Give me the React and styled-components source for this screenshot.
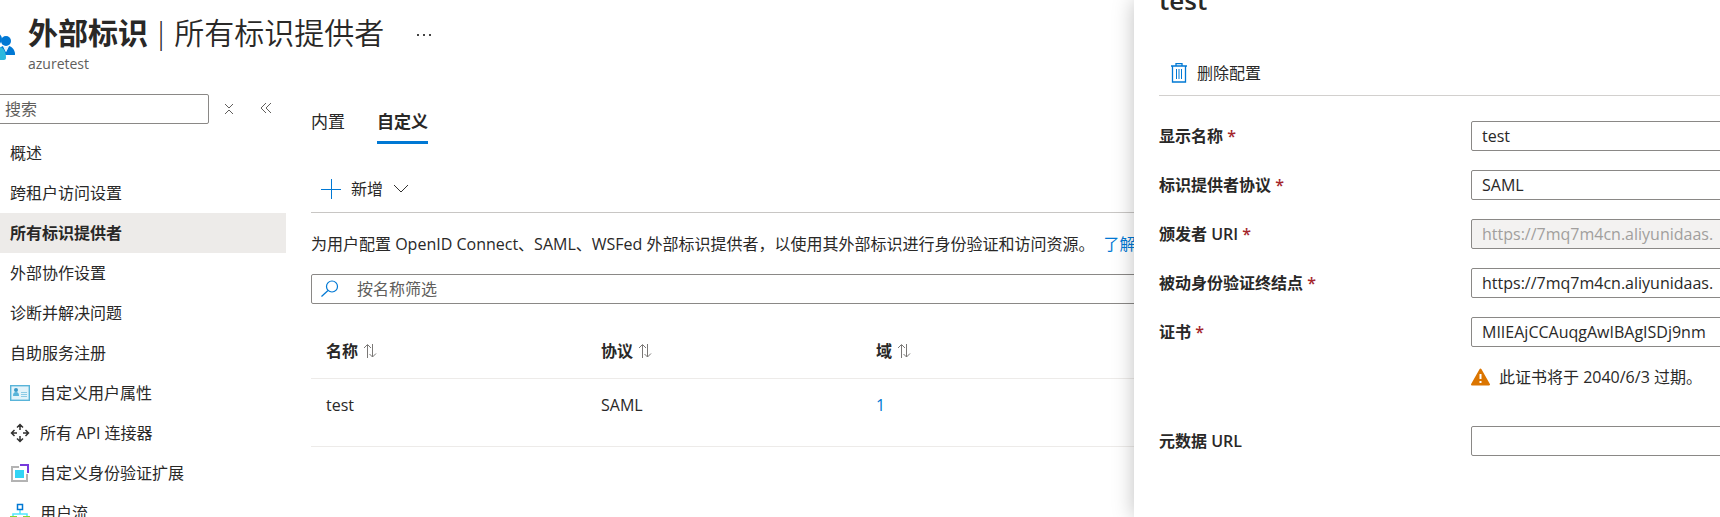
import React from 'react'
import styled, {createGlobalStyle, css} from 'styled-components';

const topItems = ['概述', '跨租户访问设置', '所有标识提供者', '外部协作设置', '诊断并解决问题', '自助服务注册'];

const iconItems = [
    {label: '自定义用户属性', icon: <AttributesIcon/>},
    {label: '所有 API 连接器', icon: <ConnectorsIcon/>},
    {label: '自定义身份验证扩展', icon: <ExtensionsIcon/>},
    {label: '用户流', icon: <FlowIcon/>},
];

const columns = ['名称', '协议', '域'];

const fields = [
    {id: 'name', label: '显示名称', value: 'test'},
    {id: 'protocol', label: '标识提供者协议', value: 'SAML'},
    {id: 'issuer', label: '颁发者 URI', value: 'https://7mq7m4cn.aliyunidaas.', disabled: true},
    {id: 'endpoint', label: '被动身份验证终结点', value: 'https://7mq7m4cn.aliyunidaas.'},
    {id: 'cert', label: '证书', value: 'MIIEAjCCAuqgAwIBAgISDj9nm'},
];

function App() {
    return (
        <Shell>
            <GlobalStyle/>
            <Header>
                <PeopleIcon/>
                <Heading>
                    <TitleRow>
                        <Title><b>外部标识</b><span>|</span><span>所有标识提供者</span></Title>
                        <IconButton aria-label="更多"><DotsIcon/></IconButton>
                    </TitleRow>
                    <Subtitle>azuretest</Subtitle>
                </Heading>
            </Header>
            <Body>
                <Sidebar>
                    <SearchRow>
                        <SearchInput type="text" placeholder="搜索" aria-label="搜索"/>
                        <IconButton aria-label="展开"><ExpandIcon/></IconButton>
                        <IconButton aria-label="折叠菜单"><CollapseIcon/></IconButton>
                    </SearchRow>
                    <Menu>
                        {topItems.map(item =>
                            <MenuItem key={item} href="#" $active={item === '所有标识提供者'}>{item}</MenuItem>
                        )}
                    </Menu>
                    <Menu>
                        {iconItems.map(({label, icon}) =>
                            <MenuItem key={label} href="#">{icon}{label}</MenuItem>
                        )}
                    </Menu>
                </Sidebar>
                <Main>
                    <Tabs>
                        <Tab>内置</Tab>
                        <Tab $active>自定义</Tab>
                    </Tabs>
                    <Toolbar>
                        <Command><PlusIcon/>新增<ChevronIcon/></Command>
                    </Toolbar>
                    <Intro>
                        <span>为用户配置 OpenID Connect、SAML、WSFed 外部标识提供者，以使用其外部标识进行身份验证和访问资源。</span>
                        <Link href="#">了解</Link>
                    </Intro>
                    <Filter>
                        <SearchIcon/>
                        <input type="text" placeholder="按名称筛选" aria-label="按名称筛选"/>
                    </Filter>
                    <Table>
                        <thead>
                            <tr>
                                {columns.map(name =>
                                    <th key={name}><SortLabel>{name}<SortIcon/></SortLabel></th>
                                )}
                                <th></th>
                            </tr>
                        </thead>
                        <tbody>
                            <tr>
                                <td>test</td>
                                <td>SAML</td>
                                <td><Link href="#">1</Link></td>
                                <td></td>
                            </tr>
                        </tbody>
                    </Table>
                </Main>
            </Body>
            <Panel>
                <PanelBody>
                    <PanelTitle>test</PanelTitle>
                    <PanelToolbar>
                        <Command><TrashIcon/>删除配置</Command>
                    </PanelToolbar>
                    <Form>
                        {fields.map(({id, label, value, disabled}) =>
                            <Field key={id}>
                                <Label htmlFor={id}>{label} <span>*</span></Label>
                                <FieldInput id={id} type="text" defaultValue={value} disabled={disabled}/>
                            </Field>
                        )}
                        <Warning><WarningIcon/>此证书将于 2040/6/3 过期。</Warning>
                        <Field>
                            <Label htmlFor="metadata">元数据 URL</Label>
                            <FieldInput id="metadata" type="text"/>
                        </Field>
                    </Form>
                </PanelBody>
            </Panel>
        </Shell>
    )
}

export default App

function PeopleIcon() {
    return (
        <svg width="32" height="32" viewBox="0 0 32 32">
            <circle cx="12" cy="11" r="6" fill="#0078d4"/>
            <circle cx="22" cy="13" r="5" fill="#0078d4"/>
            <path d="M14 27c0-5 2-8 5-9l3 6 3-6c4 1 6 5 6 8 0 1 0 1-1 1z" fill="#0078d4"/>
            <path d="M19 18l3 6 3-6c-2 1-4 1-6 0z" fill="#e3f1fb"/>
            <path d="M2 30c0-7 4-12 10-12 7 0 10 5 10 12 0 1-1 2-2 2H4c-1 0-2-1-2-2z" fill="#2bb9de"/>
        </svg>
    )
}

function DotsIcon() {
    return (
        <svg width="16" height="16" viewBox="0 0 16 16" fill="#444">
            <rect x="1" y="9" width="2" height="2"/>
            <rect x="7" y="9" width="2" height="2"/>
            <rect x="13" y="9" width="2" height="2"/>
        </svg>
    )
}

function ExpandIcon() {
    return (
        <svg width="12" height="12" viewBox="0 0 12 12" fill="none" stroke="#605e5c">
            <path d="M2 1l4 4 4-4M2 11l4-4 4 4"/>
        </svg>
    )
}

function CollapseIcon() {
    return (
        <svg width="12" height="12" viewBox="0 0 12 12" fill="none" stroke="#605e5c">
            <path d="M6 0L1 5l5 5M11 0L6 5l5 5"/>
        </svg>
    )
}

function AttributesIcon() {
    return (
        <svg width="20" height="20" viewBox="0 0 20 20">
            <rect x=".7" y="2.700" width="18.600" height="14.600" fill="#e3f3fa" stroke="#59b4d9" strokeWidth="1.400"/>
            <circle cx="6" cy="7" r="2" fill="#3999c6"/>
            <path d="M3 13c0-3 1-4 3-4s3 1 3 4z" fill="#59b4d9"/>
            <path d="M11 9.500h6M11 11.500h6M11 13.500h6" stroke="#8ccbe5"/>
        </svg>
    )
}

function ConnectorsIcon() {
    return (
        <svg width="20" height="20" viewBox="0 0 20 20" fill="none" stroke="#323130" strokeWidth="1.500">
            <path d="M10 7V2M7 4.500l3-3 3 3M10 13v5M7 15.500l3 3 3-3M7 10H2M4.500 7l-3 3 3 3M13 10h5M15.500 7l3 3-3 3"/>
        </svg>
    )
}

function ExtensionsIcon() {
    return (
        <svg width="20" height="20" viewBox="0 0 20 20" fill="none" strokeWidth="2">
            <path d="M9 4H2v14h15v-7" stroke="#b3b3b3"/>
            <path d="M10 2h8v8" stroke="#773adc"/>
            <rect x="5" y="7" width="9" height="8" fill="#32d4f5"/>
        </svg>
    )
}

function FlowIcon() {
    return (
        <svg width="20" height="20" viewBox="0 0 20 20" fill="none">
            <path d="M10 7v4M3 14v-3h14v3" stroke="#50e6ff" strokeWidth="1.500"/>
            <rect x="7.500" y="1.500" width="5" height="5" stroke="#0078d4" strokeWidth="1.500"/>
            <path d="M1 14h5v5H1zM14 14h5v5h-5z" stroke="#86d633" strokeWidth="2"/>
        </svg>
    )
}

function PlusIcon() {
    return (
        <svg width="20" height="20" viewBox="0 0 20 20" stroke="#0078d4">
            <path d="M0 10.500h20M10.500 0v20"/>
        </svg>
    )
}

function ChevronIcon() {
    return (
        <svg width="16" height="16" viewBox="0 0 16 16" fill="none" stroke="#323130">
            <path d="M1 4l7 7 7-7"/>
        </svg>
    )
}

function SearchIcon() {
    return (
        <svg width="18" height="18" viewBox="0 0 18 18" fill="none" stroke="#0078d4" strokeWidth="1.200">
            <circle cx="11" cy="6.500" r="5.500"/>
            <path d="M7 10.500l-6.500 6"/>
        </svg>
    )
}

function SortIcon() {
    return (
        <svg width="14" height="14" viewBox="0 0 14 14" fill="none" stroke="#7a7876">
            <path d="M4.500 14V1M1 4l3.500-3.500L8 4M9.500 0v13M6.500 10l3 3 3.500-3.500"/>
        </svg>
    )
}

function TrashIcon() {
    return (
        <svg width="16" height="20" viewBox="0 0 16 20" fill="none" stroke="#0078d4">
            <path d="M0 3h16M5 2.500v-2h6v2" strokeWidth="1.300"/>
            <path d="M1.500 3v16h13V3" strokeWidth="1.300"/>
            <path d="M5.500 6v10M8 6v10M10.500 6v10"/>
        </svg>
    )
}

function WarningIcon() {
    return (
        <svg width="19" height="18" viewBox="0 0 19 18">
            <path d="M9.500 1.500L18 16.500H1z" fill="#db7500" stroke="#db7500" strokeWidth="2" strokeLinejoin="round"/>
            <path d="M9.500 6v5M9.500 13v2" stroke="#fff" strokeWidth="2"/>
        </svg>
    )
}

const GlobalStyle = createGlobalStyle `
* {
    box-sizing: border-box;
}
body {
    margin: 0;
    background: #fff;
    color: #292827;
    overflow: hidden;
}
body, input, button {
    font-family: "Open Sans", "Noto Sans CJK SC", sans-serif;
    font-size: 16px;
    line-height: 24px;
}
svg {
    flex-shrink: 0;
}
`

const Shell = styled.div `
    position: relative;
    height: 100vh;
    overflow: hidden;
`

const Header = styled.header `
    display: flex;
    align-items: center;
    height: 82px;
    margin-left: -16px;
    gap: 12px;
    padding-top: 6px;
`

const Heading = styled.div `
    display: flex;
    flex-direction: column;
`

const TitleRow = styled.div `
    display: flex;
    align-items: center;
    gap: 32px;
`

const Title = styled.h1 `
    display: flex;
    gap: 5px;
    margin: 0;
    font-size: 30px;
    line-height: 40px;
    font-weight: 350;
    b {
        font-weight: 700;
    }
`

const Subtitle = styled.div `
    font-size: 14px;
    line-height: 22px;
    color: #605e5c;
`

const IconButton = styled.button `
    display: flex;
    align-items: center;
    padding: 0;
    border: 0;
    background: none;
    cursor: pointer;
`

const Body = styled.div `
    display: flex;
    gap: 25px;
`

const Sidebar = styled.nav `
    width: 286px;
    flex-shrink: 0;
    padding-top: 12px;
`

const SearchRow = styled.div `
    display: flex;
    align-items: center;
    gap: 25px;
    margin: 0 0 9px -8px;
`

const inputBox = css `
    height: 30px;
    border: 1px solid #8a8886;
    border-radius: 2px;
    background: #fff;
    color: #292827;
    outline: none;
`

const SearchInput = styled.input `
    ${inputBox}
    width: 217px;
    padding: 0 12px;
    margin-right: -11px;
    &::placeholder {
        color: #605e5c;
    }
`

const Menu = styled.div `
    display: flex;
    flex-direction: column;
`

const MenuItem = styled.a `
    display: flex;
    align-items: center;
    gap: 10px;
    height: 40px;
    padding: 0 10px;
    color: inherit;
    text-decoration: none;
    ${({$active}) => $active &&
`
background: #edebe9;
font-weight: 700;
`
}
`

const Main = styled.main `
    flex: 1;
    min-width: 0;
    padding-top: 28px;
`

const Tabs = styled.div `
    display: flex;
    gap: 32px;
`

const Tab = styled.button `
    padding: 0 0 7px;
    border: 0;
    border-bottom: 3px solid transparent;
    background: none;
    color: inherit;
    font-size: 17px;
    cursor: pointer;
    ${({$active}) => $active &&
`
border-color: #0078d4;
font-weight: 700;
`
}
`

const Toolbar = styled.div `
    display: flex;
    align-items: center;
    height: 69px;
    padding: 22px 10px 0;
    border-bottom: 1px solid #c8c6c4;
`

const Command = styled.button `
    display: flex;
    align-items: center;
    gap: 10px;
    padding: 0;
    border: 0;
    background: none;
    color: inherit;
    cursor: pointer;
`

const Intro = styled.p `
    display: flex;
    gap: 9px;
    margin: 19px 0 18px;
    white-space: nowrap;
`

const Link = styled.a `
    color: #0078d4;
    text-decoration: none;
`

const Filter = styled.label `
    ${inputBox}
    display: flex;
    align-items: center;
    gap: 18px;
    padding: 0 9px;
    input {
        flex: 1;
        padding: 0;
        border: 0;
        outline: none;
        background: none;
    }
    input::placeholder {
        color: #605e5c;
    }
`

const Table = styled.table `
    width: 100%;
    margin-top: 20px;
    table-layout: fixed;
    border-collapse: collapse;
    th, td {
        padding: 0 15px;
        text-align: left;
        border-bottom: 1px solid #edebe9;
    }
    th {
        width: 275px;
        height: 54px;
    }
    th:last-child {
        width: auto;
    }
    td {
        height: 68px;
        padding-bottom: 14px;
    }
`

const SortLabel = styled.div `
    display: flex;
    align-items: center;
    gap: 5px;
`

const Panel = styled.aside `
    position: absolute;
    top: 0;
    right: 0;
    bottom: 0;
    width: 586px;
    overflow: hidden;
    background: #fff;
    box-shadow: 0 0 20px rgba(0, 0, 0, .25);
`

const PanelBody = styled.div `
    width: 720px;
    padding: 0 25px;
`

const PanelTitle = styled.h2 `
    margin: -20px 0 0;
    font-size: 26px;
    line-height: 40px;
    font-weight: 600;
`

const PanelToolbar = styled.div `
    display: flex;
    align-items: center;
    height: 76px;
    padding: 30px 12px 0;
    border-bottom: 1px solid #d2d0ce;
`

const Form = styled.div `
    display: flex;
    flex-direction: column;
    gap: 19px;
    padding-top: 25px;
`

const Field = styled.div `
    display: flex;
    align-items: center;
`

const Label = styled.label `
    width: 312px;
    flex-shrink: 0;
    font-weight: 600;
    span {
        color: #a4262c;
    }
`

const FieldInput = styled.input `
    ${inputBox}
    flex: 1;
    padding: 0 10px;
    &:disabled {
        background: #f3f2f1;
        color: #a19f9d;
    }
`

const Warning = styled.div `
    display: flex;
    align-items: center;
    gap: 9px;
    margin: 0 0 19px 312px;
    line-height: 22px;
`
